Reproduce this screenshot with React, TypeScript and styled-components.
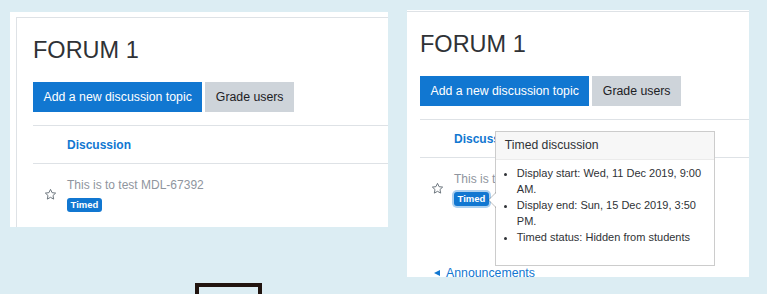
import styled, { createGlobalStyle } from "styled-components";

const GlobalStyle = createGlobalStyle`
  html, body {
    margin: 0;
    padding: 0;
    height: 294px;
    overflow: hidden;
    background: #dcedf3;
    font-family: "Liberation Sans", Arial, sans-serif;
  }
`

const Page = styled.div`
  display: flex;
  align-items: flex-start;
  height: 294px;
  overflow: hidden;
`

const LeftColumn = styled.div`
  display: flex;
  flex-direction: column;
  margin-left: 10px;
`

const Panel = styled.section<{ $top: number; $left?: number; $width: number; $height: number }>`
  margin-top: ${p => p.$top}px;
  margin-left: ${p => p.$left ?? 0}px;
  width: ${p => p.$width}px;
  height: ${p => p.$height}px;
  background: #fff;
  overflow: hidden;
  flex-shrink: 0;
`

const Frame = styled.div<{ $insetTop: number; $insetLeft: number; $leftBorder?: boolean; $pad: number }>`
  margin: ${p => p.$insetTop}px 0 0 ${p => p.$insetLeft}px;
  border-top: 1px solid #dee2e6;
  border-left: ${p => (p.$leftBorder ? "1px solid #dee2e6" : "none")};
  padding: 18px 0 0 ${p => p.$pad}px;
  height: 100%;
  position: relative;
`

const Title = styled.h2`
  margin: 0 0 18px;
  font-size: 23.5px;
  line-height: 28px;
  font-weight: 400;
  color: #2f3236;
`

const Actions = styled.div`
  display: flex;
  gap: 3px;
`

const Button = styled.button<{ $variant: "primary" | "secondary" }>`
  height: 30px;
  padding: 0 10.5px;
  border: none;
  border-radius: 0;
  font-family: inherit;
  font-size: 12.3px;
  line-height: 30px;
  background: ${p => (p.$variant === "primary" ? "#1177d1" : "#ced4da")};
  color: ${p => (p.$variant === "primary" ? "#fff" : "#1d2125")};
`

const Table = styled.div`
  margin-top: 13px;
  border-top: 1px solid #dee2e6;
`

const HeaderRow = styled.div`
  display: flex;
  align-items: center;
  height: 37px;
  border-bottom: 1px solid #dee2e6;
`

const Row = styled.div`
  display: flex;
  align-items: center;
  padding: 12px 0 12px;
`

const IconCell = styled.div`
  width: 34px;
  flex-shrink: 0;
  display: flex;
  justify-content: center;
`

const MainCell = styled.div`
  display: flex;
  flex-direction: column;
  align-items: flex-start;
`

const ColumnTitle = styled.span`
  font-size: 12px;
  font-weight: 700;
  line-height: 18px;
  color: #1177d1;
`

const Subject = styled.span`
  font-size: 12px;
  line-height: 18px;
  color: #8f959e;
  white-space: nowrap;
`

const BadgeWrap = styled.span`
  position: relative;
  display: inline-flex;
  margin-top: 4px;
`

const Badge = styled.span<{ $focused?: boolean }>`
  display: inline-block;
  height: 14px;
  line-height: 14px;
  padding: 0 3.5px;
  border-radius: 3px;
  background: #1177d1;
  color: #fff;
  font-size: 9.5px;
  font-weight: 700;
  box-shadow: ${p => (p.$focused ? "0 0 0 2px rgba(17, 119, 209, 0.35)" : "none")};
`

const Popover = styled.div`
  position: absolute;
  left: calc(100% + 6px);
  top: -61px;
  width: 220px;
  box-sizing: border-box;
  background: #fff;
  border: 1px solid rgba(0, 0, 0, 0.2);
  z-index: 2;
`

const PopoverArrow = styled.span`
  position: absolute;
  left: -8px;
  top: 60px;
  width: 0;
  height: 0;
  border-style: solid;
  border-width: 8px 8px 8px 0;
  border-color: transparent rgba(0, 0, 0, 0.25) transparent transparent;

  &::after {
    content: "";
    position: absolute;
    left: 1px;
    top: -7px;
    border-style: solid;
    border-width: 7px 7px 7px 0;
    border-color: transparent #fff transparent transparent;
  }
`

const PopoverHeader = styled.div`
  height: 27px;
  line-height: 27px;
  padding: 0 9px;
  background: #f7f7f7;
  border-bottom: 1px solid #ebebeb;
  font-size: 12.2px;
  color: #2f3236;
`

const PopoverBody = styled.div`
  padding: 5px 10px 8px;
`

const List = styled.ul`
  margin: 0 0 12px;
  padding-left: 11px;
  font-size: 11px;
  line-height: 16px;
  color: #2f3236;
`

const BackLink = styled.a`
  display: block;
  margin-top: 46px;
  margin-left: 14px;
  font-size: 12.3px;
  line-height: 18px;
  color: #1177d1;
  text-decoration: none;
`

const BackArrow = styled.span`
  display: inline-block;
  width: 0;
  height: 0;
  margin-right: 6px;
  border-style: solid;
  border-width: 3.5px 6px 3.5px 0;
  border-color: transparent #1177d1 transparent transparent;
  vertical-align: 1px;
`

const Marker = styled.div`
  margin: 56px 0 0 185px;
  width: 67px;
  height: 30px;
  box-sizing: border-box;
  border: 4px solid #21140f;
`

const Star = () => (
  <svg width="13" height="13" viewBox="0 0 24 24" fill="none" stroke="#6a737b" strokeWidth="1.8" strokeLinejoin="round">
    <polygon points="12,2.5 14.9,8.6 21.5,9.4 16.6,13.9 17.9,20.5 12,17.2 6.1,20.5 7.4,13.9 2.5,9.4 9.1,8.6" />
  </svg>
)

function Discussions({ withPopover }: { withPopover?: boolean }) {
  return (
    <Table>
      <HeaderRow>
        <IconCell />
        <ColumnTitle>Discussion</ColumnTitle>
      </HeaderRow>
      <Row>
        <IconCell>
          <Star />
        </IconCell>
        <MainCell>
          <Subject>This is to test MDL-67392</Subject>
          <BadgeWrap>
            <Badge $focused={withPopover}>Timed</Badge>
            {withPopover && (
              <Popover>
                <PopoverArrow />
                <PopoverHeader>Timed discussion</PopoverHeader>
                <PopoverBody>
                  <List>
                    <li>Display start: Wed, 11 Dec 2019, 9:00 AM.</li>
                    <li>Display end: Sun, 15 Dec 2019, 3:50 PM.</li>
                    <li>Timed status: Hidden from students</li>
                  </List>
                </PopoverBody>
              </Popover>
            )}
          </BadgeWrap>
        </MainCell>
      </Row>
    </Table>
  )
}

function App() {
  return (
    <>
      <GlobalStyle />
      <Page>
        <LeftColumn>
          <Panel $top={12} $width={378} $height={215}>
            <Frame $insetTop={5} $insetLeft={6} $leftBorder $pad={16}>
              <Title>FORUM 1</Title>
              <Actions>
                <Button $variant="primary">Add a new discussion topic</Button>
                <Button $variant="secondary">Grade users</Button>
              </Actions>
              <Discussions />
            </Frame>
          </Panel>
          <Marker />
        </LeftColumn>
        <Panel $top={10} $left={19} $width={342} $height={267}>
          <Frame $insetTop={1} $insetLeft={0} $pad={13}>
            <Title>FORUM 1</Title>
            <Actions>
              <Button $variant="primary">Add a new discussion topic</Button>
              <Button $variant="secondary">Grade users</Button>
            </Actions>
            <Discussions withPopover />
            <BackLink href="#">
              <BackArrow />
              Announcements
            </BackLink>
          </Frame>
        </Panel>
      </Page>
    </>
  )
}

export default App
